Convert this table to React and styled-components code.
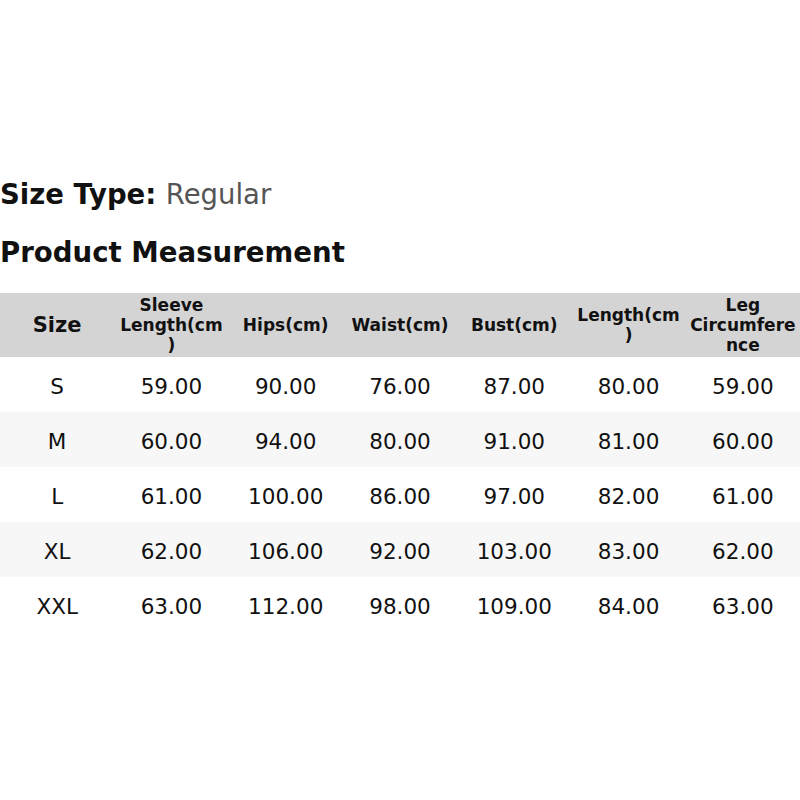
import React from 'react'
import styled, { createGlobalStyle } from 'styled-components'

const Global = createGlobalStyle`
  body {
    margin: 0;
    background: #fff;
    font-family: 'DejaVu Sans', sans-serif;
    color: #111;
  }
`

const Page = styled.div`
  width: 800px;
  height: 800px;
  padding-top: 174px;
  box-sizing: border-box;
`

const SizeType = styled.div`
  font-size: 27.5px;
  line-height: 40px;
  font-weight: bold;
  color: #111;
  span {
    font-weight: normal;
    color: #555;
  }
`

const Heading = styled.h2`
  margin: 19px 0 0;
  font-size: 27.6px;
  line-height: 40px;
  font-weight: bold;
  color: #111;
`

const Table = styled.table`
  margin-top: 20px;
  width: 800px;
  table-layout: fixed;
  border-collapse: collapse;
`

const HeadRow = styled.tr`
  background: #d4d4d4;
  height: 64px;
`

const Th = styled.th`
  padding: 0 4px;
  font-size: ${({ $big }) => ($big ? '21px' : '17px')};
  line-height: 20px;
  font-weight: bold;
  text-align: center;
  overflow-wrap: break-word;
  color: #111;
`

const Row = styled.tr`
  height: 55px;
  background: ${({ $alt }) => ($alt ? '#f7f7f7' : '#fff')};
`

const Td = styled.td`
  text-align: center;
  font-size: 21.5px;
  color: #111;
  padding: 3px 0 0;
`

const HEADERS = [
  'Size',
  'Sleeve Length(cm)',
  'Hips(cm)',
  'Waist(cm)',
  'Bust(cm)',
  'Length(cm)',
  'Leg Circumference',
]

const ROWS = [
  ['S', '59.00', '90.00', '76.00', '87.00', '80.00', '59.00'],
  ['M', '60.00', '94.00', '80.00', '91.00', '81.00', '60.00'],
  ['L', '61.00', '100.00', '86.00', '97.00', '82.00', '61.00'],
  ['XL', '62.00', '106.00', '92.00', '103.00', '83.00', '62.00'],
  ['XXL', '63.00', '112.00', '98.00', '109.00', '84.00', '63.00'],
]

export default function App() {
  return (
    <Page>
      <Global />
      <SizeType>
        Size Type: <span>Regular</span>
      </SizeType>
      <Heading>Product Measurement</Heading>
      <Table>
        <thead>
          <HeadRow>
            {HEADERS.map((h, i) => (
              <Th key={h} $big={i === 0}>
                {h}
              </Th>
            ))}
          </HeadRow>
        </thead>
        <tbody>
          {ROWS.map((row, i) => (
            <Row key={row[0]} $alt={i % 2 === 1}>
              {row.map((cell, j) => (
                <Td key={j}>{cell}</Td>
              ))}
            </Row>
          ))}
        </tbody>
      </Table>
    </Page>
  )
}
